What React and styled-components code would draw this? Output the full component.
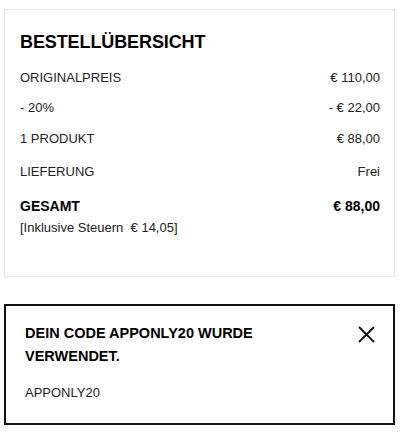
import React from "react";
import styled, { createGlobalStyle } from "styled-components";

const Global = createGlobalStyle`
  html, body { margin: 0; padding: 0; background: #fff; }
  body { font-family: "Liberation Sans", Arial, sans-serif; color: #1a1a1a; }
`;

const Page = styled.div`
  width: 391px;
  padding: 9px 0 0 4px;
  display: flex;
  flex-direction: column;
  gap: 27px;
`;

const SummaryCard = styled.section`
  box-sizing: border-box;
  height: 268px;
  border: 1px solid #e6e6e6;
  padding: 20px 14px 0 15px;
  display: flex;
  flex-direction: column;
`;

const Title = styled.h2`
  margin: 0;
  font-size: 18px;
  line-height: 24px;
  font-weight: 700;
  color: #000;
  letter-spacing: -0.1px;
`;

const Row = styled.div`
  display: flex;
  justify-content: space-between;
  align-items: center;
  margin-top: ${(p) => p.$gap}px;
  font-size: ${(p) => (p.$strong ? 14 : 13)}px;
  line-height: 20px;
  font-weight: ${(p) => (p.$strong ? 700 : 400)};
  color: ${(p) => (p.$strong ? "#000" : "#222")};
`;

const Note = styled.div`
  margin-top: 2px;
  font-size: 13px;
  line-height: 20px;
  color: #222;
  white-space: pre;
`;

const CodeBox = styled.section`
  box-sizing: border-box;
  height: 121px;
  border: 2px solid #111;
  padding: 16px 18px 0 19px;
  display: flex;
  justify-content: space-between;
  align-items: flex-start;
`;

const CodeText = styled.div`
  display: flex;
  flex-direction: column;
`;

const CodeTitle = styled.h3`
  margin: 0;
  width: 250px;
  font-size: 14.5px;
  line-height: 23px;
  font-weight: 700;
  color: #000;
`;

const CodeName = styled.div`
  margin-top: 15px;
  font-size: 13px;
  line-height: 20px;
  color: #222;
`;

const CloseButton = styled.button`
  border: 0;
  background: none;
  padding: 0;
  margin-top: 3px;
  width: 18px;
  height: 18px;
  display: flex;
  align-items: center;
  justify-content: center;
  cursor: pointer;
`;

const rows = [
  { label: "ORIGINALPREIS", value: "€ 110,00", gap: 14 },
  { label: "- 20%", value: "- € 22,00", gap: 10 },
  { label: "1 PRODUKT", value: "€ 88,00", gap: 10.5 },
  { label: "LIEFERUNG", value: "Frei", gap: 13.7 },
];

export default function App() {
  return (
    <>
      <Global />
      <Page>
        <SummaryCard>
          <Title>BESTELLÜBERSICHT</Title>
          {rows.map((r) => (
            <Row key={r.label} $gap={r.gap}>
              <span>{r.label}</span>
              <span>{r.value}</span>
            </Row>
          ))}
          <Row $gap={14} $strong>
            <span>GESAMT</span>
            <span>€ 88,00</span>
          </Row>
          <Note>{"[Inklusive Steuern  € 14,05]"}</Note>
        </SummaryCard>
        <CodeBox>
          <CodeText>
            <CodeTitle>DEIN CODE APPONLY20 WURDE VERWENDET.</CodeTitle>
            <CodeName>APPONLY20</CodeName>
          </CodeText>
          <CloseButton aria-label="Schließen">
            <svg width="17" height="17" viewBox="0 0 17 17">
              <path d="M1 1 L16 16 M16 1 L1 16" stroke="#111" strokeWidth="1.8" fill="none" />
            </svg>
          </CloseButton>
        </CodeBox>
      </Page>
    </>
  );
}
